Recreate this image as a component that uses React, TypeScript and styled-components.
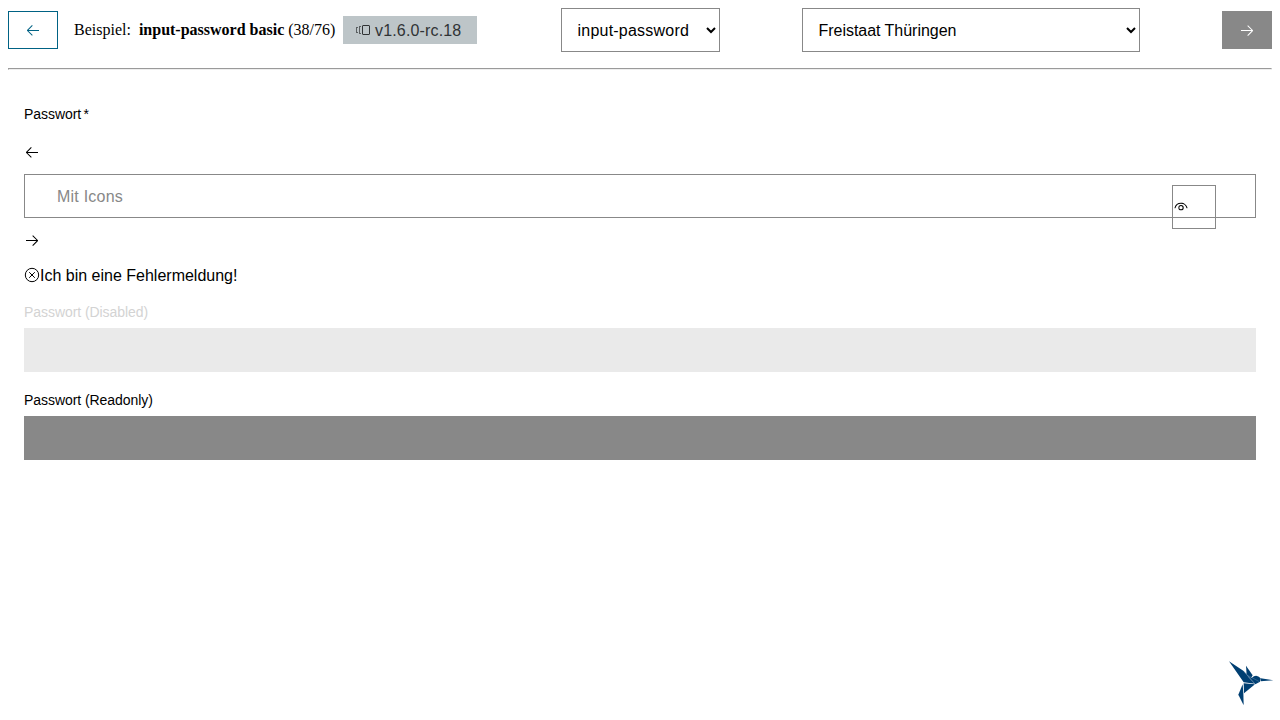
import React from "react";
import styled, { createGlobalStyle } from "styled-components";

const sans = '"Liberation Sans", Arial, sans-serif';

const GlobalStyle = createGlobalStyle`
  *, *::before, *::after { box-sizing: border-box; }
  body { margin: 8px; background: #fff; color: #000; font: 16px/normal "Liberation Serif", "Times New Roman", serif; }
`;

const Header = styled.header`
  display: flex;
  align-items: center;
  height: 44px;
`;

const NavButton = styled.button<{ $variant: "outline" | "filled" }>`
  display: flex;
  align-items: center;
  justify-content: center;
  width: 50px;
  height: 38px;
  padding: 0;
  border: 1px solid ${(p) => (p.$variant === "outline" ? "#006284" : "#888")};
  background: ${(p) => (p.$variant === "outline" ? "#fff" : "#888")};
  color: ${(p) => (p.$variant === "outline" ? "#006284" : "#fff")};
`;

const Title = styled.div`
  display: flex;
  width: 269px;
  margin-left: 16px;
  white-space: pre;
  line-height: 18px;
`;

const TitleName = styled.span`
  margin-left: 8px;
`;

const Version = styled.span`
  display: flex;
  align-items: center;
  width: 134px;
  height: 28px;
  padding-left: 12px;
  background: #bdc5c8;
  color: #303335;
  font-family: ${sans};
  white-space: nowrap;
`;

const VersionText = styled.span`
  margin-left: 4px;
  padding-top: 2px;
  letter-spacing: 0.16px;
`;

const Select = styled.select<{ $width: number; $gap: number; $tracking: number }>`
  width: ${(p) => p.$width}px;
  height: 44px;
  margin: 0 82px 0 ${(p) => p.$gap}px;
  padding: 0 0 0 11.5px;
  border: 1px solid #888;
  border-radius: 0;
  background: #fff;
  color: #000;
  font: 16px ${sans};
  letter-spacing: ${(p) => p.$tracking}px;
`;

const Rule = styled.hr`
  margin: 16px 0 0;
  height: 2px;
  border: 1px solid;
  border-color: #9a9a9a #eee #eee #9a9a9a;
`;

const Form = styled.main`
  display: flex;
  flex-direction: column;
  padding: 36px 16px 0;
  font-family: ${sans};
`;

const Label = styled.label<{ $disabled?: boolean }>`
  height: 16px;
  font-size: 14px;
  line-height: 16px;
  letter-spacing: -0.06px;
  color: ${(p) => (p.$disabled ? "#d3d3d3" : "#000")};
`;

const Required = styled.span`
  margin-left: 2.5px;
`;

const IconRow = styled.div<{ $top: number }>`
  height: 16px;
  margin-top: ${(p) => p.$top}px;
`;

const PasswordBox = styled.div`
  position: relative;
  height: 44px;
  margin-top: 14px;
`;

const Input = styled.input`
  display: block;
  width: 100%;
  height: 44px;
  padding: 2px 32px 0;
  border: 1px solid #888;
  border-radius: 0;
  background: #fff;
  font: 16px ${sans};
  letter-spacing: 0.22px;
  &::placeholder { color: #888; opacity: 1; }
`;

const RevealButton = styled.button`
  position: absolute;
  top: 11px;
  right: 40px;
  display: flex;
  align-items: center;
  width: 44px;
  height: 44px;
  padding: 0;
  border: 1px solid #888;
  background: transparent;
  color: #000;
`;

const ErrorMessage = styled.div`
  display: flex;
  align-items: center;
  height: 18px;
  margin: 18px 0 20px;
  line-height: 18px;
`;

const ErrorText = styled.span`
  padding-top: 2px;
`;

const LockedInput = styled.input<{ $tone: string }>`
  height: 44px;
  margin: 8px 0 20px;
  padding: 0 16px;
  border: 0;
  border-radius: 0;
  background: ${(p) => p.$tone};
`;

const Icon = styled.svg`
  display: block;
  flex: none;
  width: 16px;
  height: 16px;
  fill: currentColor;
`;

const Logo = styled.svg`
  position: fixed;
  right: 6px;
  bottom: 14px;
  width: 45px;
  height: 45px;
  fill: #003f72;
`;

const ArrowLeft = () => (
  <Icon viewBox="0 0 16 16">
    <path d="M7 3.093l-5 5V8.8l5 5 .707-.707-4.146-4.147H14v-1H3.56L7.708 3.8 7 3.093z" />
  </Icon>
);

const ArrowRight = () => (
  <Icon viewBox="0 0 16 16">
    <path d="M9 13.887l5-5V8.18l-5-5-.707.707 4.146 4.147H2v1h10.44L8.293 13.18l.707.707z" />
  </Icon>
);

const Versions = () => (
  <Icon viewBox="0 0 16 16">
    <path fillRule="evenodd" d="M8 3h6l1 1v8l-1 1H8l-1-1V4l1-1zm0 9h6V4H8v8z" />
    <path opacity="0.7" d="M4 4h2v1H5v6h1v1H4V4zM1 5h2v1H2v4h1v1H1V5z" />
  </Icon>
);

const Eye = () => (
  <Icon viewBox="0 0 16 16">
    <path d="M8 6a2.667 2.667 0 1 1 0 5.333A2.667 2.667 0 0 1 8 6zm0 1a1.667 1.667 0 1 0 0 3.333A1.667 1.667 0 0 0 8 7zm0-3.333c3.076 0 5.73 2.1 6.467 5.043a.5.5 0 0 1-.97.243 5.668 5.668 0 0 0-10.995.003.5.5 0 0 1-.97-.243A6.669 6.669 0 0 1 8 3.667z" />
  </Icon>
);

const ErrorIcon = () => (
  <Icon viewBox="0 0 16 16">
    <circle cx="8" cy="8" r="6.7" fill="none" stroke="currentColor" />
    <path d="M5.2 5.2l5.6 5.6m0-5.6l-5.6 5.6" fill="none" stroke="currentColor" />
  </Icon>
);

export default function App() {
  return (
    <>
      <GlobalStyle />
      <Header>
        <NavButton $variant="outline" aria-label="zurück"><ArrowLeft /></NavButton>
        <Title>
          Beispiel:
          <TitleName><b>input-password basic</b> (38/76)</TitleName>
        </Title>
        <Version><Versions /><VersionText>v1.6.0-rc.18</VersionText></Version>
        <Select $width={159} $gap={84} $tracking={0.22}><option>input-password</option></Select>
        <Select $width={338} $gap={0} $tracking={-0.03}><option>Freistaat Thüringen</option></Select>
        <NavButton $variant="filled" aria-label="weiter"><ArrowRight /></NavButton>
      </Header>
      <Rule />
      <Form>
        <Label>Passwort<Required>*</Required></Label>
        <IconRow $top={22}><ArrowLeft /></IconRow>
        <PasswordBox>
          <Input type="password" placeholder="Mit Icons" />
          <RevealButton aria-label="anzeigen"><Eye /></RevealButton>
        </PasswordBox>
        <IconRow $top={14}><ArrowRight /></IconRow>
        <ErrorMessage><ErrorIcon /><ErrorText>Ich bin eine Fehlermeldung!</ErrorText></ErrorMessage>
        <Label $disabled>Passwort (Disabled)</Label>
        <LockedInput $tone="#eaeaea" type="password" disabled />
        <Label>Passwort (Readonly)</Label>
        <LockedInput $tone="#888" type="password" readOnly />
      </Form>
      <Logo viewBox="27 33 135 135">
        <path d="M27 34L71 63L86 82L105 101L71 97Z" />
        <path d="M78 47L98 76L93 84L80 75Z" />
        <path d="M72 65L95 84Q109 70 122 85L120 95L106 103Z" />
        <path d="M122 85L160 91L122 94Z" />
        <path d="M71 100L105 103L72 130Z" />
        <path d="M68 103L70 130L71 166L55 134Z" />
        <path d="M71 63L105 102M81 75L118 95" fill="none" stroke="#8fabc4" strokeWidth="1" />
      </Logo>
    </>
  );
}
